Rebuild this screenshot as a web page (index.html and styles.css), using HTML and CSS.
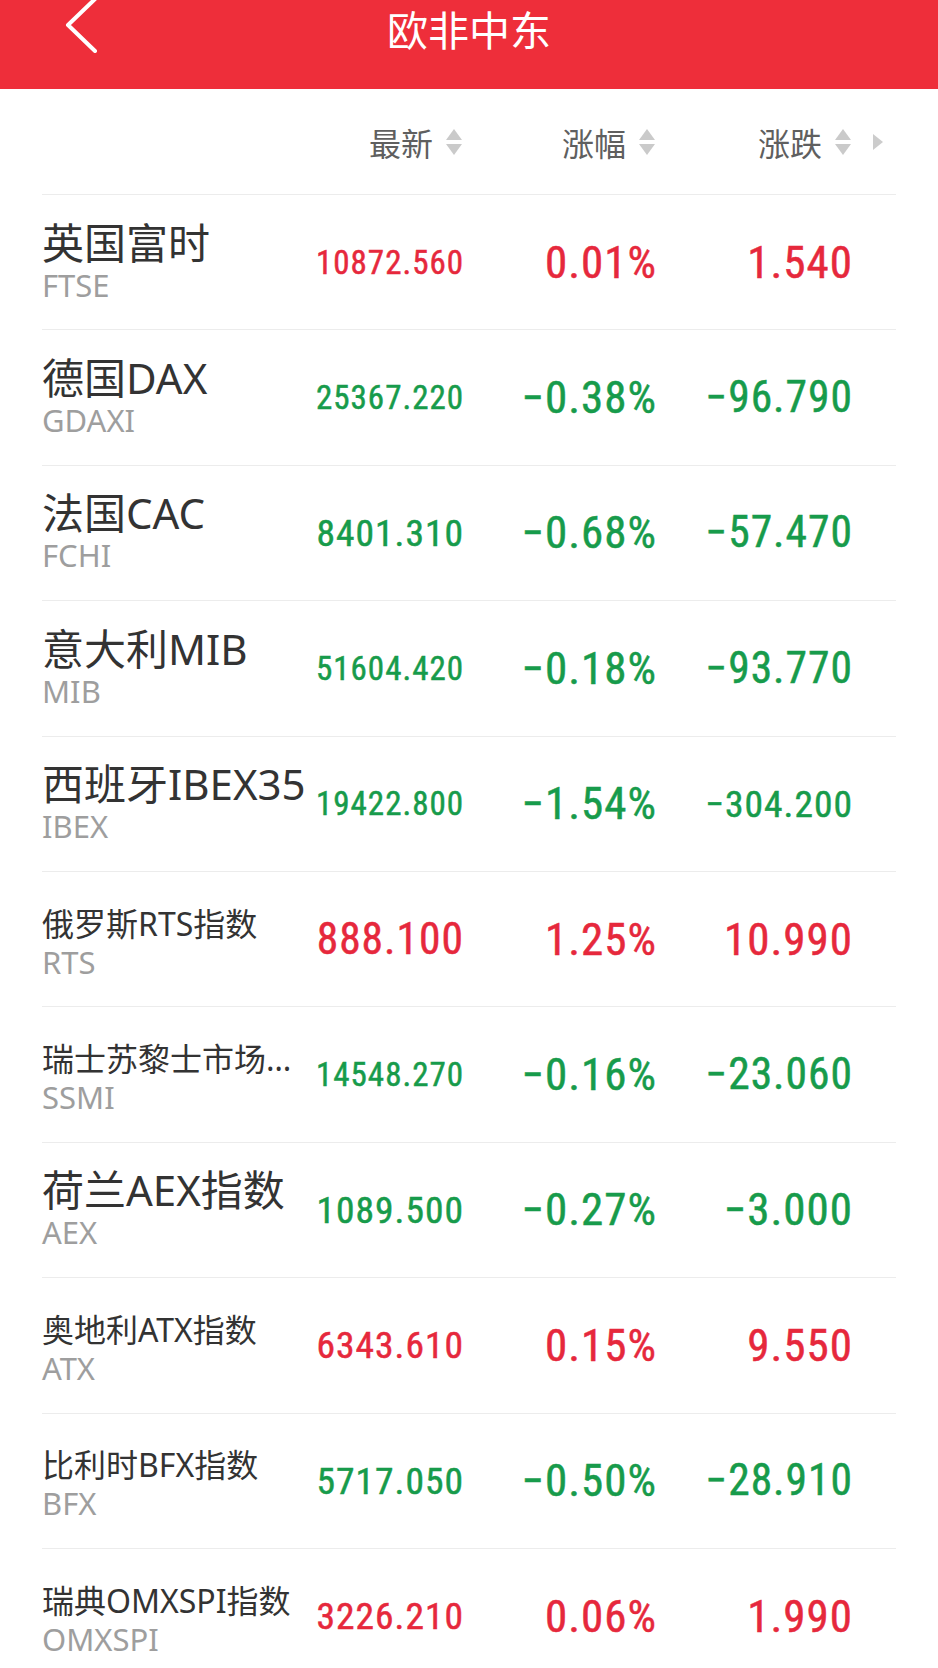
FILE: index.html
```html
<!DOCTYPE html>
<html lang="zh-CN">
<head>
  <meta charset="UTF-8">
  <title>欧非中东</title>
  <meta name="viewport" content="width=device-width, initial-scale=1.0">
  <link rel="stylesheet" href="styles.css">
</head>
<body>

  <div class="topbar">
    <svg class="back" width="40" height="54" viewBox="0 0 40 54">
      <polyline points="30,0 3,26 30,52" fill="none" stroke="#fff" stroke-width="4" stroke-linecap="round" stroke-linejoin="round"/>
    </svg>
    <h1>欧非中东</h1>
    <span></span>
  </div>

  <div class="list">
    <div class="head">
      <div class="info"></div>
      <div class="hcell">最新<svg class="sort" width="20" height="28" viewBox="0 0 20 28"><polygon points="2,12 10,1 18,12"/><polygon points="2,16 18,16 10,27"/></svg></div>
      <div class="hcell gap1">涨幅<svg class="sort" width="20" height="28" viewBox="0 0 20 28"><polygon points="2,12 10,1 18,12"/><polygon points="2,16 18,16 10,27"/></svg></div>
      <div class="hcell gap2">涨跌<svg class="sort" width="20" height="28" viewBox="0 0 20 28"><polygon points="2,12 10,1 18,12"/><polygon points="2,16 18,16 10,27"/></svg></div>
      <svg class="more" width="10" height="16" viewBox="0 0 10 16"><polygon points="0,0 10,8 0,16"/></svg>
    </div>

    <div class="row up">
      <div class="info"><div class="name">英国富时</div><div class="code">FTSE</div></div>
      <div class="num fit"><span>10872.560</span></div>
      <div class="num fit gap1"><span>0.01%</span></div>
      <div class="num fit gap2"><span>1.540</span></div>
    </div>

    <div class="row down">
      <div class="info"><div class="name">德国DAX</div><div class="code">GDAXI</div></div>
      <div class="num fit"><span>25367.220</span></div>
      <div class="num fit gap1"><span>−0.38%</span></div>
      <div class="num fit gap2"><span>−96.790</span></div>
    </div>

    <div class="row down">
      <div class="info"><div class="name">法国CAC</div><div class="code">FCHI</div></div>
      <div class="num fit"><span>8401.310</span></div>
      <div class="num fit gap1"><span>−0.68%</span></div>
      <div class="num fit gap2"><span>−57.470</span></div>
    </div>

    <div class="row down">
      <div class="info"><div class="name">意大利MIB</div><div class="code">MIB</div></div>
      <div class="num fit"><span>51604.420</span></div>
      <div class="num fit gap1"><span>−0.18%</span></div>
      <div class="num fit gap2"><span>−93.770</span></div>
    </div>

    <div class="row down">
      <div class="info"><div class="name">西班牙IBEX35</div><div class="code">IBEX</div></div>
      <div class="num fit"><span>19422.800</span></div>
      <div class="num fit gap1"><span>−1.54%</span></div>
      <div class="num fit gap2"><span>−304.200</span></div>
    </div>

    <div class="row up">
      <div class="info"><div class="name small">俄罗斯RTS指数</div><div class="code">RTS</div></div>
      <div class="num fit"><span>888.100</span></div>
      <div class="num fit gap1"><span>1.25%</span></div>
      <div class="num fit gap2"><span>10.990</span></div>
    </div>

    <div class="row down">
      <div class="info"><div class="name small clip">瑞士苏黎士市场指数</div><div class="code">SSMI</div></div>
      <div class="num fit"><span>14548.270</span></div>
      <div class="num fit gap1"><span>−0.16%</span></div>
      <div class="num fit gap2"><span>−23.060</span></div>
    </div>

    <div class="row down">
      <div class="info"><div class="name">荷兰AEX指数</div><div class="code">AEX</div></div>
      <div class="num fit"><span>1089.500</span></div>
      <div class="num fit gap1"><span>−0.27%</span></div>
      <div class="num fit gap2"><span>−3.000</span></div>
    </div>

    <div class="row up">
      <div class="info"><div class="name small">奥地利ATX指数</div><div class="code">ATX</div></div>
      <div class="num fit"><span>6343.610</span></div>
      <div class="num fit gap1"><span>0.15%</span></div>
      <div class="num fit gap2"><span>9.550</span></div>
    </div>

    <div class="row down">
      <div class="info"><div class="name small">比利时BFX指数</div><div class="code">BFX</div></div>
      <div class="num fit"><span>5717.050</span></div>
      <div class="num fit gap1"><span>−0.50%</span></div>
      <div class="num fit gap2"><span>−28.910</span></div>
    </div>

    <div class="row up">
      <div class="info"><div class="name small">瑞典OMXSPI指数</div><div class="code">OMXSPI</div></div>
      <div class="num fit"><span>3226.210</span></div>
      <div class="num fit gap1"><span>0.06%</span></div>
      <div class="num fit gap2"><span>1.990</span></div>
    </div>
  </div>

  <script>
    // shrink numbers until they fit their column (like autosize text)
    const MAX_SIZE = 45;

    document.querySelectorAll(".fit").forEach(cell => {
      const text = cell.firstElementChild;
      let size = MAX_SIZE;
      cell.style.fontSize = size + "px";
      while (text.offsetWidth > cell.clientWidth && size > 16) {
        size -= 0.5;
        cell.style.fontSize = size + "px";
      }
    });
  </script>

</body>
</html>
```

FILE: styles.css
```css
body {
  margin: 0;
  font-family: 'Noto Sans', 'Noto Sans CJK SC', sans-serif;
  background: #fff;
  color: #333;
}

.topbar {
  height: 89px;
  background: #ee2e3a;
  display: grid;
  grid-template-columns: 1fr auto 1fr;
  align-items: start;
}

.back {
  display: block;
  margin: -1px 0 0 65px;
}

.topbar h1 {
  margin: 0;
  font-size: 41px;
  font-weight: normal;
  line-height: 60px;
  color: #fff;
}

.list {
  margin: 0 42px;
}

.head,
.row {
  display: flex;
  align-items: center;
  border-bottom: 1px solid #ececec;
  padding-right: 43px;
}

.head {
  height: 106px;
  box-sizing: border-box;
  padding-right: 13px;
}

.row {
  height: 135.4px;
  box-sizing: border-box;
}

.info {
  flex: 1;
  min-width: 0;
  padding-right: 14px;
}

.name {
  font-size: 42px;
  line-height: 46px;
  white-space: nowrap;
  color: #333;
}

.name.small {
  font-size: 32px;
  line-height: 38px;
  padding-top: 8px;
}

.name.clip {
  overflow: hidden;
  text-overflow: ellipsis;
}

.code {
  font-size: 31px;
  line-height: 39px;
  color: #9e9e9e;
}

.hcell {
  width: 148px;
  display: flex;
  align-items: center;
  justify-content: flex-end;
  font-size: 32px;
  color: #5f5f5f;
}

.sort {
  margin-left: 11px;
  fill: #cacaca;
}

.more {
  margin-left: 20px;
  fill: #cccccc;
}

.num {
  width: 148px;
  flex-shrink: 0;
  text-align: right;
  white-space: nowrap;
  font-family: 'Roboto Condensed', 'Liberation Sans Narrow', Roboto, sans-serif;
  font-size: 45px;
  letter-spacing: 1px;
  -webkit-text-stroke: 0.5px currentColor;
}

.gap1 {
  margin-left: 45px;
}

.gap2 {
  margin-left: 48px;
}

.up .num {
  color: #e6283c;
}

.down .num {
  color: #179b4b;
}
```
